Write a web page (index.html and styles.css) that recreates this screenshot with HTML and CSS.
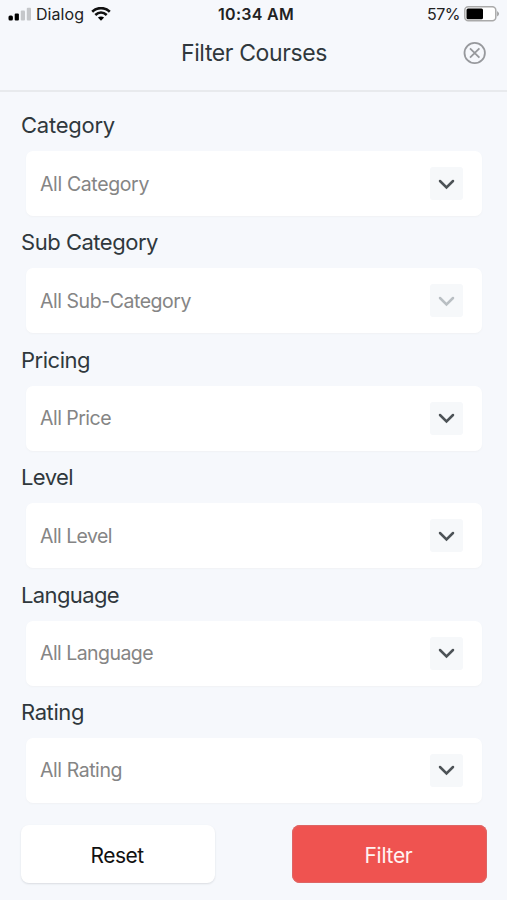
FILE: index.html
```html
<!DOCTYPE html>
<html lang="en"><head><meta charset="utf-8"><title>Filter Courses</title><link rel="stylesheet" href="styles.css"></head>
<body>
<div class="status">
<svg class="signal" viewBox="0 0 24 14"><rect x=".5" y="8.5" width="4.4" height="5" rx="1.5"/><rect x="6.7" y="6.5" width="4.2" height="7" rx="1"/><rect class="dim" x="12.8" y="3.5" width="4.2" height="10" rx="1"/><rect class="dim" x="18.8" y=".7" width="4.2" height="12.8" rx="1"/></svg>
<span class="carrier"><span class="fit" data-w="48">Dialog</span></span>
<svg class="wifi" viewBox="0 0 20 14"><path d="M1.2 4.7C6.2-.1 13.8-.1 18.8 4.7M4.3 8C7.8 4.8 12.2 4.8 15.7 8" fill="none" stroke="#111" stroke-width="2.6"/><path d="M10 13.7 6.9 10.6Q10 8.2 13.1 10.6Z"/></svg>
<span class="time"><span class="fit" data-w="76">10:34 AM</span></span>
<span class="percent"><span class="fit" data-w="33">57%</span></span>
<svg class="battery" viewBox="0 0 36 16"><rect x=".8" y=".8" width="31" height="14" rx="3.5" fill="#fff" stroke="#aaa" stroke-width="1.5"/><rect x="2.5" y="2.6" width="16.5" height="10.6" rx="1.5"/><path d="M33.3 5q3 2.8 0 5.6z" fill="#888"/></svg>
</div>
<header><h1><span class="fit" data-w="146">Filter Courses</span></h1><svg class="close" viewBox="0 0 24 24"><circle cx="11.7" cy="12" r="10.2"/><path d="m7 7.3 9.4 9.4m0-9.4L7 16.7"/></svg></header>
<main>
<section><h2><span class="fit" data-w="94">Category</span></h2><div class="select"><span class="fit" data-w="109">All Category</span><span class="arrow"><svg viewBox="0 0 18 12"><path d="m2 3 6.5 6.5L15 3"/></svg></span></div></section>
<section><h2><span class="fit" data-w="137">Sub Category</span></h2><div class="select disabled"><span class="fit" data-w="151">All Sub-Category</span><span class="arrow"><svg viewBox="0 0 18 12"><path d="m2 3 6.5 6.5L15 3"/></svg></span></div></section>
<section><h2><span class="fit" data-w="69">Pricing</span></h2><div class="select"><span class="fit" data-w="71">All Price</span><span class="arrow"><svg viewBox="0 0 18 12"><path d="m2 3 6.5 6.5L15 3"/></svg></span></div></section>
<section><h2><span class="fit" data-w="52">Level</span></h2><div class="select"><span class="fit" data-w="72">All Level</span><span class="arrow"><svg viewBox="0 0 18 12"><path d="m2 3 6.5 6.5L15 3"/></svg></span></div></section>
<section><h2><span class="fit" data-w="98">Language</span></h2><div class="select"><span class="fit" data-w="113">All Language</span><span class="arrow"><svg viewBox="0 0 18 12"><path d="m2 3 6.5 6.5L15 3"/></svg></span></div></section>
<section><h2><span class="fit" data-w="63">Rating</span></h2><div class="select"><span class="fit" data-w="82">All Rating</span><span class="arrow"><svg viewBox="0 0 18 12"><path d="m2 3 6.5 6.5L15 3"/></svg></span></div></section>
</main>
<footer><button><span class="fit" data-w="53">Reset</span></button><button class="primary"><span class="fit" data-w="48">Filter</span></button></footer>
<script src="script.js"></script>
</body></html>
```
FILE: styles.css
```css
*{box-sizing:border-box}
body{margin:0;width:507px;height:900px;overflow:hidden;background:#f6f8fc;font-family:Inter,"Liberation Sans",sans-serif;color:#30383d}
.fit{display:inline-block;white-space:nowrap}
.status{height:28px;display:grid;grid-template-columns:24px 48px 20px 1fr 33px 36px;align-items:center;padding:0 7px 0 8px;column-gap:4px;font:16px/28px Inter,sans-serif;color:#222}
.signal{width:24px;height:14px}.dim{fill:#c5c7ca}.wifi{width:20px;height:14px;margin-left:3px}.time{font-weight:600;padding-left:106px}.battery{width:36px;height:16px}
header{height:64px;border-bottom:2px solid #e8eaed;display:grid;grid-template-columns:1fr 24px;padding:0 20px 0 181px}
h1,h2{margin:0;font-weight:400}h1{font-size:23px;line-height:50px}
.close{width:24px;height:24px;margin-top:13px;fill:none;stroke:#97999d;stroke-width:1.8}
main{padding:16px 25px 0 21px}
section{height:117.4px}h2{font-size:22px;line-height:34px;height:43px}
.select{height:65px;margin-left:5px;background:#fff;border-radius:7px;display:flex;justify-content:space-between;align-items:center;padding:0 19px 0 14px;font-size:19.5px;color:#858585;box-shadow:0 1px 2px #f0f2f5}
.arrow{width:33px;height:33px;background:#f6f8fa;border-radius:3px;display:flex;align-items:center;justify-content:center}
.arrow svg{width:18px;height:12px;fill:none;stroke:#4d5357;stroke-width:2.5;stroke-linecap:round}.disabled .arrow svg{stroke:#b9bfc3}
footer{display:flex;justify-content:space-between;padding:0 20px 0 21px;margin-top:13px}
button{width:194px;height:58px;border:0;border-radius:8px;background:#fff;color:#111;font:21px/58px Inter,sans-serif;padding:2px 2px 0 0;box-shadow:0 1px 2px #d9dce1}
.primary{width:195px;background:#ef5350;color:#fff3f2;box-shadow:inset 0 0 1px 1px #dc6866}
```
FILE: script.js
```js
document.querySelectorAll('.fit').forEach(el => {
  const letters = el.textContent.length;
  const extra = (Number(el.dataset.w) - el.getBoundingClientRect().width) / letters;
  el.style.letterSpacing = extra + 'px';
});
```
